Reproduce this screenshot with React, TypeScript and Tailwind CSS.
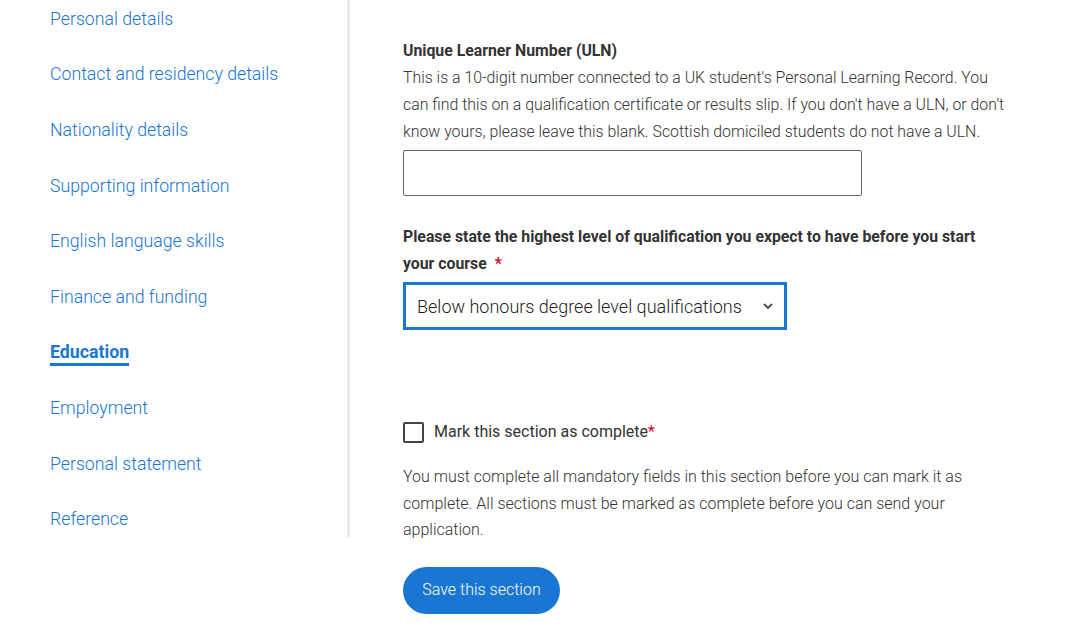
import React from "react";

const links = [
  "Personal details",
  "Contact and residency details",
  "Nationality details",
  "Supporting information",
  "English language skills",
  "Finance and funding",
  "Education",
  "Employment",
  "Personal statement",
  "Reference",
];

export default function App() {
  return (
    <div className="w-[1080px] h-[641px] bg-white overflow-hidden font-['Roboto',sans-serif] relative">
      <div className="flex">
        <nav className="w-[350px] shrink-0 pl-[50px] border-r-[3px] border-[#ebebeb] h-[537px]">
          <ul className="flex flex-col -mt-[9px]">
            {links.map((l) => (
              <li key={l} className="h-[55.6px] flex items-center">
                {l === "Education" ? (
                  <span className="text-[17.8px] font-bold text-[#1976d2] border-b-[3px] border-[#1976d2] leading-[22px] mt-[2px]">
                    {l}
                  </span>
                ) : (
                  <span className="text-[17.7px] font-light text-[#1976d2] leading-[22px]">{l}</span>
                )}
              </li>
            ))}
          </ul>
        </nav>
        <main className="pl-[53px] pt-[37px] text-[#333]">
          <label className="block text-[15.8px] font-bold text-[#333] leading-[27px]">
            Unique Learner Number (ULN)
          </label>
          <p className="text-[15.85px] font-light leading-[27px] w-[610px] text-[#333]">
            This is a 10-digit number connected to a UK student's Personal Learning Record. You can find this on a
            qualification certificate or results slip. If you don't have a ULN, or don’t know yours, please leave this
            blank. Scottish domiciled students do not have a ULN.
          </p>
          <div className="mt-[5px] w-[459px] h-[46px] border border-[#666] rounded-[2px]" />
          <div className="mt-[27px] w-[590px] text-[15.8px] font-bold leading-[27px] text-[#333]">
            <div>Please state the highest level of qualification you expect to have before you start</div>
            <div className="flex items-center">
              <span>your course</span>
              <span className="text-[#e4002b] ml-[8px]">*</span>
            </div>
          </div>
          <div className="mt-[5px] w-[384px] h-[48px] border-[3px] border-[#1976d2] flex items-center justify-between pl-[11px] pr-[10px]">
            <span className="text-[18px] font-light text-[#222]">Below honours degree level qualifications</span>
            <svg width="12" height="8" viewBox="0 0 12 8" fill="none">
              <path d="M2 2l4 4 4-4" stroke="#444" strokeWidth="1.8" />
            </svg>
          </div>
          <div className="mt-[90px] flex items-center gap-[10px]">
            <span className="w-[21px] h-[21px] border-2 border-[#444] rounded-[2px] inline-block" />
            <span className="text-[16px] font-normal text-[#333]">
              Mark this section as complete<span className="text-[#e4002b]">*</span>
            </span>
          </div>
          <p className="mt-[20px] text-[16px] font-light leading-[26.5px] w-[560px] text-[#333]">
            You must complete all mandatory fields in this section before you can mark it as complete. All sections must
            be marked as complete before you can send your application.
          </p>
          <button className="mt-[23px] w-[157px] h-[47px] rounded-full bg-[#1976d2] text-white text-[16px] font-light">
            Save this section
          </button>
        </main>
      </div>
    </div>
  );
}
